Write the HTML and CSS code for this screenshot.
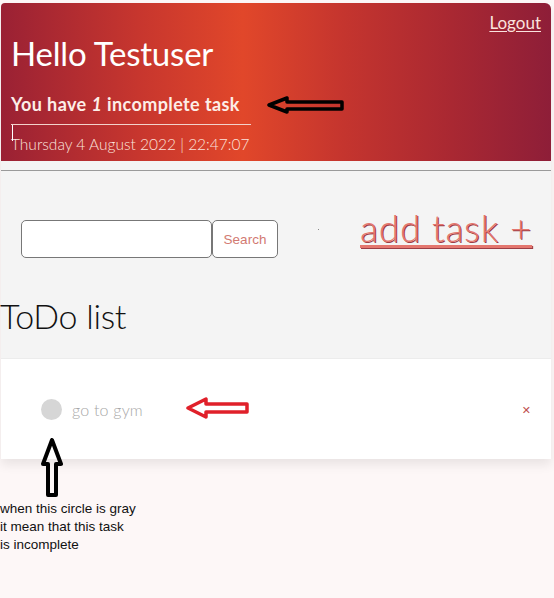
FILE: index.html
```html
<!DOCTYPE html>
<html lang="en">
<head>
<meta charset="utf-8">
<title>ToDo</title>
<link rel="stylesheet" href="styles.css">
</head>
<body>
<div class="app">
  <header class="hero">
    <div class="hero-top"><a class="logout" href="#">Logout</a></div>
    <h1 class="hello">Hello Testuser</h1>
    <p class="count">You have <em>1</em> incomplete task</p>
    <p class="date">Thursday 4 August 2022 | 22:47:07</p>
    <svg class="arrow-black" width="78" height="20" viewBox="0 0 78 20">
      <path d="M2 10 L20 3 L20 7 L75 7 L75 14 L20 14 L20 17 Z" fill="none" stroke="#000" stroke-width="3.5" stroke-linejoin="round"/>
    </svg>
  </header>
  <section class="toolbar">
    <hr class="divider">
    <div class="tools">
      <form class="search">
        <input class="search-input" type="text">
        <button class="search-btn" type="button">Search</button>
      </form>
      <span class="dot"></span>
      <a class="add" href="#">add task +</a>
    </div>
    <h2 class="list-title">ToDo list</h2>
  </section>
  <ul class="tasks">
    <li class="task">
      <span class="check"></span>
      <span class="task-name">go to gym</span>
      <svg class="arrow-red" width="64" height="22" viewBox="0 0 64 22">
        <path d="M2 11 L20 2 L20 7 L61 7 L61 15 L20 15 L20 20 Z" fill="none" stroke="#e0202a" stroke-width="3.5" stroke-linejoin="round"/>
      </svg>
      <span class="remove">&#x2715;</span>
    </li>
  </ul>
  <svg class="arrow-up" width="24" height="60" viewBox="0 0 24 60">
    <path d="M12 2 L21 26 L16 26 L16 57 L8 57 L8 26 L3 26 Z" fill="none" stroke="#000" stroke-width="4" stroke-linejoin="round"/>
  </svg>
</div>
<p class="note">when this circle is gray<br>it mean that this task<br>is incomplete</p>
</body>
</html>
```
FILE: styles.css
```css
* { box-sizing: border-box; }
html, body { margin: 0; padding: 0; }
body {
  background: #fdf7f7;
  font-family: "Lato", "Open Sans", sans-serif;
  width: 554px;
  height: 598px;
  overflow: hidden;
}
.app {
  position: relative;
  width: 550px;
  margin: 3px 0 0 1px;
  box-shadow: 0 6px 10px rgba(0,0,0,0.08);
}
.hero {
  position: relative;
  height: 158px;
  padding: 0 10px;
  border-radius: 4px 6px 0 0;
  background: linear-gradient(90deg, #9a2134 0%, #c7362e 25%, #e1472a 44%, #c5352e 62%, #a92832 82%, #8e1e38 100%);
  color: #fff;
}
.hero-top {
  display: flex;
  justify-content: flex-end;
  padding-top: 9px;
  height: 30px;
}
.logout {
  color: #fbe3df;
  font-size: 17px;
  font-weight: 400;
  text-decoration: underline;
  text-underline-offset: 2px;
}
.hello {
  margin: 0;
  font-size: 33px;
  font-weight: 400;
  line-height: 40px;
  letter-spacing: -0.2px;
}
.count {
  margin: 20px 0 0;
  width: 240px;
  font-size: 18px;
  font-weight: 700;
  line-height: 22px;
  letter-spacing: 0.4px;
  padding-bottom: 9px;
  border-bottom: 1px solid #f3d2cb;
  color: #fdeee8;
}
.count em { font-style: italic; font-weight: 700; }
.date {
  position: relative;
  margin: 0;
  padding-top: 9px;
  font-size: 15.5px;
  font-weight: 300;
  line-height: 20px;
  color: #fbe2dc;
}
.date::before {
  content: "";
  position: absolute;
  left: 1px;
  top: 0;
  width: 1px;
  height: 16px;
  background: #fff;
}
.arrow-black {
  position: absolute;
  left: 266px;
  top: 92px;
}
.toolbar {
  background: #f4f4f4;
  padding: 9px 0 0;
  height: 197px;
}
.divider {
  margin: 0;
  border: 0;
  border-top: 1px solid #9a9a9a;
}
.tools {
  display: flex;
  align-items: center;
  padding: 49px 0 0 20px;
  height: 87px;
}
.search { display: flex; }
.search-input {
  width: 191px;
  height: 38px;
  border: 1px solid #777;
  border-radius: 5px;
  background: #fff;
  margin: 0;
}
.search-btn {
  width: 66px;
  height: 38px;
  margin: 0;
  border: 1px solid #777;
  border-radius: 5px;
  background: #fff;
  color: #d27a72;
  font-family: "Liberation Sans", Arial, sans-serif;
  font-size: 13.5px;
}
.dot {
  width: 1px;
  height: 1px;
  background: #888;
  margin: 0 0 20px 40px;
}
.add {
  margin-left: 41px;
  margin-top: -24px;
  font-size: 37px;
  font-weight: 300;
  color: #e4776f;
  text-shadow: 1px 1px 0 #9c3d45;
  text-decoration: underline;
  text-decoration-thickness: 3px;
  text-underline-offset: 3px;
  letter-spacing: 0.8px;
}
.list-title {
  margin: 38px 0 0 -1px;
  font-size: 34px;
  font-weight: 300;
  line-height: 40px;
  color: #111;
  letter-spacing: -0.3px;
}
.tasks {
  list-style: none;
  margin: 0;
  padding: 0;
  background: #fff;
  border-top: 1px solid #ececec;
  height: 101px;
}
.task {
  position: relative;
  display: flex;
  align-items: center;
  height: 100px;
  padding: 0 0 0 40px;
}
.check {
  width: 21px;
  height: 21px;
  border-radius: 50%;
  background: #d6d6d6;
}
.task-name {
  margin-left: 10px;
  font-size: 16px;
  font-weight: 300;
  color: #a7a7a7;
  letter-spacing: 0.2px;
}
.arrow-red {
  position: absolute;
  left: 185px;
  top: 38px;
}
.remove {
  margin-left: auto;
  margin-right: 20px;
  margin-top: 3px;
  color: #c0504d;
  font-size: 11px;
  font-weight: 700;
  font-family: "DejaVu Sans", sans-serif;
}
.arrow-up {
  position: absolute;
  left: 39px;
  top: 435px;
}
.note {
  margin: 41px 0 0 0;
  font-family: "Liberation Sans", Arial, sans-serif;
  font-size: 13.5px;
  line-height: 18px;
  color: #111;
}
```
